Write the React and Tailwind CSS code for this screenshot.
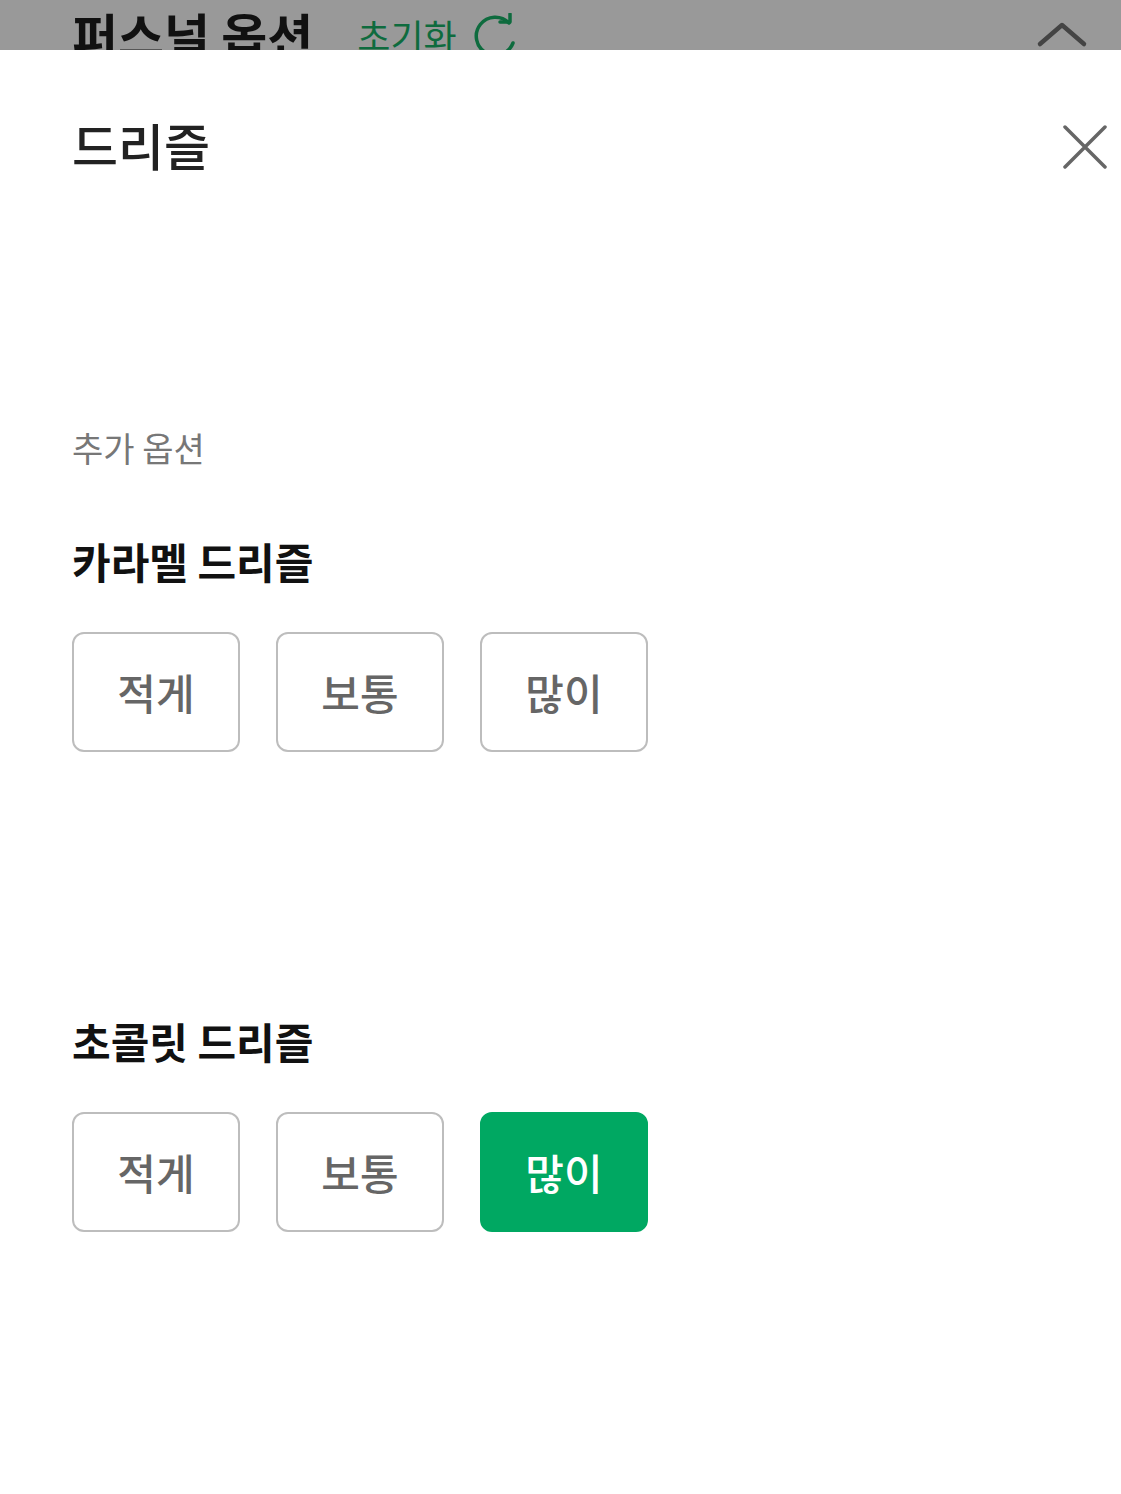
import React from "react";

const font = { fontFamily: '"Noto Sans CJK KR", "Noto Sans", sans-serif' };

function OptionRow({ selected }) {
  const items = ["적게", "보통", "많이"];
  return (
    <div className="flex gap-[36px]">
      {items.map((t) => {
        const on = t === selected;
        return (
          <div
            key={t}
            className={
              on
                ? "w-[168px] h-[120px] rounded-[12px] bg-[#00a862] border-2 border-[#00a862] flex items-center justify-center text-[42px] font-medium text-white leading-none"
                : "w-[168px] h-[120px] rounded-[12px] bg-white border-2 border-[#bdbdbd] flex items-center justify-center text-[42px] font-medium text-[#666666] leading-none"
            }
          >
            {t}
          </div>
        );
      })}
    </div>
  );
}

export default function App() {
  return (
    <div className="w-[1121px] h-[1494px] bg-white overflow-hidden" style={font}>
      <div className="h-[50px] bg-[#999999] overflow-hidden flex items-start pl-[72px] pr-[33px]">
        <div className="flex items-start pt-[9px]">
          <span className="text-[50px] font-bold text-[#111111] leading-none whitespace-nowrap">퍼스널 옵션</span>
          <span className="ml-[44px] mt-[8px] text-[36px] text-[#0e6b3e] leading-none whitespace-nowrap">초기화</span>
          <svg className="ml-[16px] mt-[4px]" width="46" height="46" viewBox="0 0 46 46" fill="none">
            <path d="M36 10 A19 19 0 1 0 40 30" stroke="#0e6b3e" strokeWidth="3.5" strokeLinecap="round" />
            <path d="M27 9 L37 9 L37 1" stroke="#0e6b3e" strokeWidth="3.5" strokeLinecap="round" strokeLinejoin="round" />
          </svg>
        </div>
        <div className="ml-auto pt-[22px]">
          <svg width="52" height="26" viewBox="0 0 52 26" fill="none">
            <path d="M4 22 L26 3 L48 22" stroke="#444444" strokeWidth="4.5" strokeLinecap="round" strokeLinejoin="round" />
          </svg>
        </div>
      </div>

      <div className="pl-[72px] pr-[14px]">
        <div className="flex items-start justify-between pt-[69px]">
          <h1 className="text-[50px] font-medium text-[#222222] leading-none">드리즐</h1>
          <svg className="mt-[6px]" width="44" height="44" viewBox="0 0 44 44" fill="none">
            <path d="M2 2 L42 42 M42 2 L2 42" stroke="#666666" strokeWidth="3.5" strokeLinecap="round" />
          </svg>
        </div>

        <div className="pt-[262px] text-[34px] text-[#777777] leading-none">추가 옵션</div>

        <div className="pt-[75px] text-[42px] font-bold text-[#111111] leading-none">카라멜 드리즐</div>
        <div className="pt-[50px]">
          <OptionRow selected={null} />
        </div>

        <div className="pt-[268px] text-[42px] font-bold text-[#111111] leading-none">초콜릿 드리즐</div>
        <div className="pt-[50px]">
          <OptionRow selected="많이" />
        </div>
      </div>
    </div>
  );
}
